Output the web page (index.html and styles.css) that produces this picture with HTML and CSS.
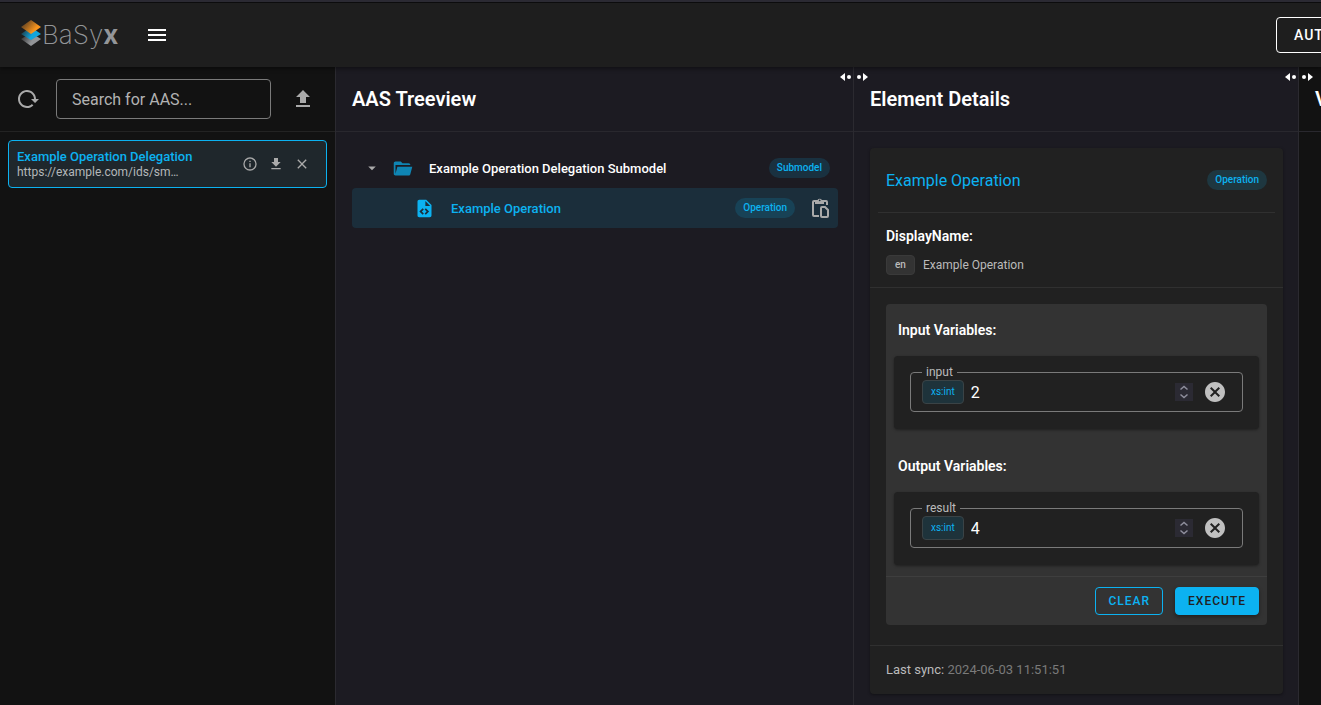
FILE: index.html
```html
<!DOCTYPE html>
<html lang="en">
<head>
<meta charset="utf-8">
<title>BaSyx</title>
<link rel="stylesheet" href="styles.css">
</head>
<body>
<header class="app-bar">
  <div class="logo">
    <svg class="logo-mark" width="22" height="28" viewBox="0 0 22 28" aria-hidden="true">
      <defs>
        <linearGradient id="orange" x1="0" y1="0" x2="0.8" y2="0.5"><stop offset="0" stop-color="#1e1e1e"/><stop offset="0.35" stop-color="#7a4f20"/><stop offset="1" stop-color="#f7941e"/></linearGradient>
        <linearGradient id="blue" x1="0" y1="0" x2="0.7" y2="0.3"><stop offset="0" stop-color="#1e1e1e"/><stop offset="1" stop-color="#12a5dc"/></linearGradient>
        <linearGradient id="gray" x1="0" y1="0" x2="0.7" y2="0.3"><stop offset="0" stop-color="#1e1e1e"/><stop offset="1" stop-color="#939598"/></linearGradient>
      </defs>
      <path fill="url(#gray)" d="M1 18 11 12 21 18 11 25Z"/>
      <path fill="url(#blue)" d="M1 13 11 6 21 13 11 19Z"/>
      <path fill="url(#orange)" d="M1 6 11 -1 21 6 11 13Z"/>
    </svg>
    <span class="logo-text">BaSy<b>x</b></span>
  </div>
  <button class="icon-btn menu-btn" type="button" aria-label="Menu"><svg width="24" height="24" viewBox="0 0 24 24"><path d="M3 6h18v2H3zM3 11h18v2H3zM3 16h18v2H3z"/></svg></button>
  <button class="sync-btn" type="button">AUT</button>
</header>

<div class="layout">
  <aside class="sidebar">
    <div class="bar sidebar-bar">
      <button class="icon-btn" type="button" aria-label="Reload"><svg width="24" height="24" viewBox="0 0 24 24"><path d="M2 12C2 16.97 6.03 21 11 21C13.39 21 15.68 20.06 17.4 18.4L15.9 16.9C14.63 18.25 12.86 19 11 19C4.76 19 1.64 11.46 6.05 7.05C10.46 2.64 18 5.77 18 12H15L19 16H19.1L23 12H20C20 7.03 15.97 3 11 3C6.03 3 2 7.03 2 12Z"/></svg></button>
      <input class="search" type="text" placeholder="Search for AAS..." aria-label="Search for AAS">
      <button class="icon-btn upload-btn" type="button" aria-label="Upload"><svg width="24" height="24" viewBox="0 0 24 24"><path d="M9,16V10H5L12,3L19,10H15V16H9M5,20V18H19V20H5Z"/></svg></button>
    </div>
    <div class="aas-item">
      <div class="aas-text">
        <div class="aas-title">Example Operation Delegation</div>
        <div class="aas-id">https://example.com/ids/sm…</div>
      </div>
      <div class="aas-actions">
        <button class="icon-btn" type="button" aria-label="Info"><svg width="16" height="16" viewBox="0 0 24 24"><path d="M11,9H13V7H11M12,20C7.59,20 4,16.41 4,12C4,7.59 7.59,4 12,4C16.41,4 20,7.59 20,12C20,16.41 16.41,20 12,20M12,2A10,10 0 0,0 2,12A10,10 0 0,0 12,22A10,10 0 0,0 22,12A10,10 0 0,0 12,2M11,17H13V11H11V17Z"/></svg></button>
        <button class="icon-btn" type="button" aria-label="Download"><svg width="16" height="16" viewBox="0 0 24 24"><path d="M5,20H19V18H5M19,9H15V3H9V9H5L12,16L19,9Z"/></svg></button>
        <button class="icon-btn" type="button" aria-label="Remove"><svg width="16" height="16" viewBox="0 0 24 24"><path d="M19,6.41L17.59,5L12,10.59L6.41,5L5,6.41L10.59,12L5,17.59L6.41,19L12,13.41L17.59,19L19,17.59L13.41,12L19,6.41Z"/></svg></button>
      </div>
    </div>
  </aside>

  <main class="panels">
    <section class="panel">
      <svg class="resizer" width="28" height="8" viewBox="0 0 28 8"><path d="M0 4 5 0V8ZM28 4 23 0V8Z"/><circle cx="9" cy="4" r="2"/><circle cx="19" cy="4" r="2"/></svg>
      <div class="bar"><h2 class="panel-title">AAS Treeview</h2></div>
      <div class="tree">
        <div class="tree-row">
          <button class="icon-btn caret" type="button" aria-label="Collapse"><svg width="18" height="18" viewBox="0 0 24 24"><path d="M7,10L12,15L17,10H7Z"/></svg></button>
          <svg class="folder" width="21" height="21" viewBox="0 0 24 24"><path d="M19,20H4C2.89,20 2,19.1 2,18V6C2,4.89 2.89,4 4,4H10L12,6H19A2,2 0 0,1 21,8H21L4,8V18L6.14,10H23.21L20.93,18.5C20.7,19.37 19.92,20 19,20Z"/></svg>
          <span class="tree-label">Example Operation Delegation Submodel</span>
          <span class="chip">Submodel</span>
        </div>
        <div class="tree-row child selected">
          <svg class="file" width="21" height="21" viewBox="0 0 24 24"><path d="M13,9H18.5L13,3.5V9M6,2H14L20,8V20A2,2 0 0,1 18,22H6C4.89,22 4,21.1 4,20V4C4,2.89 4.89,2 6,2M6.12,15.5L9.86,19.24L11.28,17.83L8.95,15.5L11.28,13.17L9.86,11.76L6.12,15.5M17.28,15.5L13.54,11.76L12.12,13.17L14.45,15.5L12.12,17.83L13.54,19.24L17.28,15.5Z"/></svg>
          <span class="tree-label">Example Operation</span>
          <span class="chip">Operation</span>
          <button class="icon-btn paste" type="button" aria-label="Copy path"><svg width="20" height="20" viewBox="0 0 20 20"><path class="line" d="M9 18H4Q3 18 3 17V4Q3 3 4 3H16Q17 3 17 4V7"/><path d="M5 2h2.500a2.500 2.500 0 0 1 4.400 0H14v4H5z"/><circle class="hole" cx="9.700" cy="2.300" r="0.900"/><path class="line" d="M12 9H15L18 12V18Q18 19 17 19H12Q11 19 11 18V10Q11 9 12 9Z"/></svg></button>
        </div>
      </div>
    </section>

    <section class="panel">
      <svg class="resizer" width="28" height="8" viewBox="0 0 28 8"><path d="M0 4 5 0V8ZM28 4 23 0V8Z"/><circle cx="9" cy="4" r="2"/><circle cx="19" cy="4" r="2"/></svg>
      <div class="bar"><h2 class="panel-title">Element Details</h2></div>
      <article class="card">
        <div class="card-head">
          <h3 class="card-title">Example Operation</h3>
          <span class="chip">Operation</span>
        </div>
        <div class="display-name">
          <h4 class="label">DisplayName:</h4>
          <div class="lang-row"><span class="lang">en</span><span class="lang-text">Example Operation</span></div>
        </div>
        <div class="operation">
          <h4 class="label var-label">Input Variables:</h4>
          <div class="sheet">
            <div class="field">
              <label class="field-label" for="input-value">input</label>
              <span class="type-chip">xs:int</span>
              <input class="value" id="input-value" type="number" value="2">
              <span class="spinner"><svg width="18" height="18" viewBox="0 0 18 18"><path d="M5.500 6.500 9 3.500 12.500 6.500M5.500 11.500 9 14.500 12.500 11.500"/></svg></span>
              <button class="icon-btn clear" type="button" aria-label="Clear input"><svg width="24" height="24" viewBox="0 0 24 24"><path d="M12,2C17.53,2 22,6.47 22,12C22,17.53 17.53,22 12,22C6.47,22 2,17.53 2,12C2,6.47 6.47,2 12,2M15.59,7L12,10.59L8.41,7L7,8.41L10.59,12L7,15.59L8.41,17L12,13.41L15.59,17L17,15.59L13.41,12L17,8.41L15.59,7Z"/></svg></button>
            </div>
          </div>
          <h4 class="label var-label output-label">Output Variables:</h4>
          <div class="sheet">
            <div class="field">
              <label class="field-label" for="result-value">result</label>
              <span class="type-chip">xs:int</span>
              <input class="value" id="result-value" type="number" value="4">
              <span class="spinner"><svg width="18" height="18" viewBox="0 0 18 18"><path d="M5.500 6.500 9 3.500 12.500 6.500M5.500 11.500 9 14.500 12.500 11.500"/></svg></span>
              <button class="icon-btn clear" type="button" aria-label="Clear result"><svg width="24" height="24" viewBox="0 0 24 24"><path d="M12,2C17.53,2 22,6.47 22,12C22,17.53 17.53,22 12,22C6.47,22 2,17.53 2,12C2,6.47 6.47,2 12,2M15.59,7L12,10.59L8.41,7L7,8.41L10.59,12L7,15.59L8.41,17L12,13.41L15.59,17L17,15.59L13.41,12L17,8.41L15.59,7Z"/></svg></button>
            </div>
          </div>
          <div class="actions">
            <button class="btn outlined" type="button">CLEAR</button>
            <button class="btn filled" type="button">EXECUTE</button>
          </div>
        </div>
        <footer class="sync">Last sync: <span class="sync-time">2024-06-03 11:51:51</span></footer>
      </article>
    </section>

    <section class="panel last">
      <div class="bar"><h2 class="panel-title">V</h2></div>
    </section>
  </main>
</div>
</body>
</html>
```
FILE: styles.css
```css
* { box-sizing: border-box; }
body {
  margin: 0;
  height: 100vh;
  display: flex;
  flex-direction: column;
  overflow: hidden;
  background: #121212;
  color: #fff;
  font-family: Roboto, "Liberation Sans", sans-serif;
  font-size: 14px;
}
h2, h3, h4 { margin: 0; }
button, input { font-family: inherit; }
svg { display: block; flex: none; }
.icon-btn {
  flex: none;
  padding: 0;
  border: 0;
  background: none;
  color: #aaa;
}
.icon-btn svg { fill: currentColor; }

.app-bar {
  flex: none;
  display: flex;
  align-items: center;
  height: 67px;
  padding-left: 20px;
  border-top: 2px solid #2b2a33;
  background: #1e1e1e;
  box-shadow: inset 0 1px #0c0c0d, 0 2px 4px rgba(0, 0, 0, 0.4);
  position: relative;
  z-index: 1;
  overflow-x: clip;
}
.logo { display: flex; align-items: center; width: 125px; }
.logo-mark { overflow: visible; }
.logo-text {
  color: #939598;
  font-family: Inter, Roboto, sans-serif;
  font-weight: 200;
  font-size: 26px;
  line-height: 32px;
}
.logo-text b { font-weight: 700; }
.menu-btn { color: #fff; }
.sync-btn {
  flex: none;
  width: 120px;
  height: 36px;
  margin: 0 -75px 0 auto;
  padding: 0 17px;
  border: 1px solid #fff;
  border-radius: 4px;
  background: none;
  color: #fff;
  font-size: 14px;
  font-weight: 500;
  letter-spacing: 1px;
  text-align: left;
}

.layout { flex: 1; display: flex; min-height: 0; }
.sidebar { flex: none; width: 336px; border-right: 1px solid #2b2a30; }
.bar {
  display: flex;
  align-items: center;
  height: 65px;
  padding: 0 16px;
  border-bottom: 1px solid #29282e;
}
.sidebar-bar { gap: 16px; border-color: #232323; }
.search {
  flex: 1;
  min-width: 0;
  height: 40px;
  padding: 0 15px;
  border: 1px solid #7a7a7a;
  border-radius: 4px;
  background: none;
  color: #fff;
  font-size: 16px;
}
.search::placeholder { color: #b2b2b2; opacity: 1; }
.upload-btn { margin: 0 4px; }

.aas-item {
  display: flex;
  align-items: center;
  justify-content: space-between;
  height: 48px;
  margin: 8px;
  padding: 0 16px 0 8px;
  border: 1px solid #0cb2f1;
  border-radius: 4px;
  background: #1f272c;
}
.aas-title { color: #0cb2f1; font-size: 13px; font-weight: 500; line-height: 16px; }
.aas-id { color: #b4b7b9; font-size: 12px; line-height: 14px; }
.aas-actions { display: flex; gap: 10px; }

.panels {
  flex: 1;
  min-width: 0;
  display: grid;
  grid-template-columns: 518fr 445fr 22fr;
}
.panel {
  position: relative;
  min-width: 0;
  border-right: 1px solid #2b2a30;
  background: #1c1b22;
}
.panel.last { overflow: hidden; border: 0; background: #121212; }
.panel-title { font-size: 20px; font-weight: 600; line-height: 32px; white-space: nowrap; }
.resizer { position: absolute; z-index: 1; top: 6px; right: -15px; fill: #fff; }

.tree { padding: 16px 15px 0 16px; }
.tree-row { display: flex; align-items: center; height: 40px; padding: 0 8px 0 11px; border-radius: 4px; }
.tree-row.child { padding: 0 8px 0 62px; }
.tree-row.selected { background: #1b2e3b; }
.folder { margin-left: 11px; fill: #0f85b3; }
.file { fill: #0cb2f1; }
.tree-label { flex: 1; margin-left: 16px; font-size: 13px; font-weight: 500; }
.selected .tree-label { color: #0cb2f1; }
.chip {
  flex: none;
  padding: 0 8px;
  border-radius: 10px;
  background: rgba(12, 178, 241, 0.15);
  color: #0cb2f1;
  font-size: 10px;
  font-weight: 500;
  line-height: 20px;
}
.paste { margin-left: 15px; }
.paste .line { fill: none; stroke: currentColor; stroke-width: 2; }
.paste .hole { fill: #1b2e3b; }

.card {
  margin: 16px 15px 0 16px;
  border-radius: 4px;
  background: #212121;
  box-shadow: 0 1px 3px rgba(0, 0, 0, 0.4);
}
.card-head {
  display: flex;
  align-items: center;
  justify-content: space-between;
  height: 65px;
  margin: 0 8px;
  padding: 0 8px;
  border-bottom: 1px solid #303030;
}
.card-title { color: #0cb2f1; font-size: 16px; font-weight: 400; }
.display-name { padding: 13px 16px 12px; border-bottom: 1px solid #303030; }
.label { font-size: 14px; font-weight: 600; line-height: 20px; }
.lang-row { display: flex; align-items: center; gap: 8px; margin-top: 9px; }
.lang {
  padding: 0 8px;
  border: 1px solid #3a3a3a;
  border-radius: 4px;
  background: #333;
  color: #bbb;
  font-size: 10px;
  font-weight: 500;
  line-height: 18px;
}
.lang-text { color: #bbb; font-size: 12px; }

.operation { margin: 16px; border-radius: 4px; background: #333; }
.var-label { padding: 16px 12px; }
.sheet {
  margin: 0 8px;
  padding: 16px 16px 17px;
  border-radius: 4px;
  background: #212121;
  box-shadow: 0 1px 3px rgba(0, 0, 0, 0.4);
}
.output-label { padding-top: 27px; }
.field {
  position: relative;
  display: flex;
  align-items: center;
  height: 40px;
  padding: 0 15px 0 11px;
  border: 1px solid #7a7a7a;
  border-radius: 4px;
}
.field-label {
  position: absolute;
  top: -9px;
  left: 11px;
  padding: 0 4px;
  background: #212121;
  color: #bbb;
  font-size: 12px;
  line-height: 16px;
}
.type-chip {
  flex: none;
  padding: 0 8px;
  border: 1px solid #3a4346;
  border-radius: 4px;
  background: #1e333b;
  color: #0cb2f1;
  font-size: 10px;
  line-height: 22px;
}
.value {
  flex: 1;
  min-width: 0;
  height: 24px;
  padding: 0 7px;
  border: 0;
  background: none;
  color: #fff;
  font-size: 16px;
  appearance: textfield;
}
.value::-webkit-inner-spin-button { appearance: none; margin: 0; }
.spinner { flex: none; margin-right: 10px; background: #2b2a33; }
.spinner path { fill: none; stroke: #8f8f9d; stroke-width: 1.5; }
.clear { color: #c0c0c0; }

.actions {
  display: flex;
  justify-content: flex-end;
  gap: 12px;
  margin-top: 11px;
  padding: 10px 8px;
  border-top: 1px solid #3e3e3e;
}
.btn {
  height: 28px;
  padding: 0 12px;
  border: 1px solid #0cb2f1;
  border-radius: 4px;
  color: #0cb2f1;
  font-size: 12px;
  font-weight: 500;
  letter-spacing: 1px;
}
.outlined { background: none; }
.filled { background: #0cb2f1; color: #212121; box-shadow: 0 2px 4px rgba(0, 0, 0, 0.4); }
.sync {
  margin-top: 20px;
  padding: 14px 16px;
  border-top: 1px solid #303030;
  color: #bbb;
  font-size: 13px;
  line-height: 20px;
}
.sync-time { color: #7a7a7a; }
```
